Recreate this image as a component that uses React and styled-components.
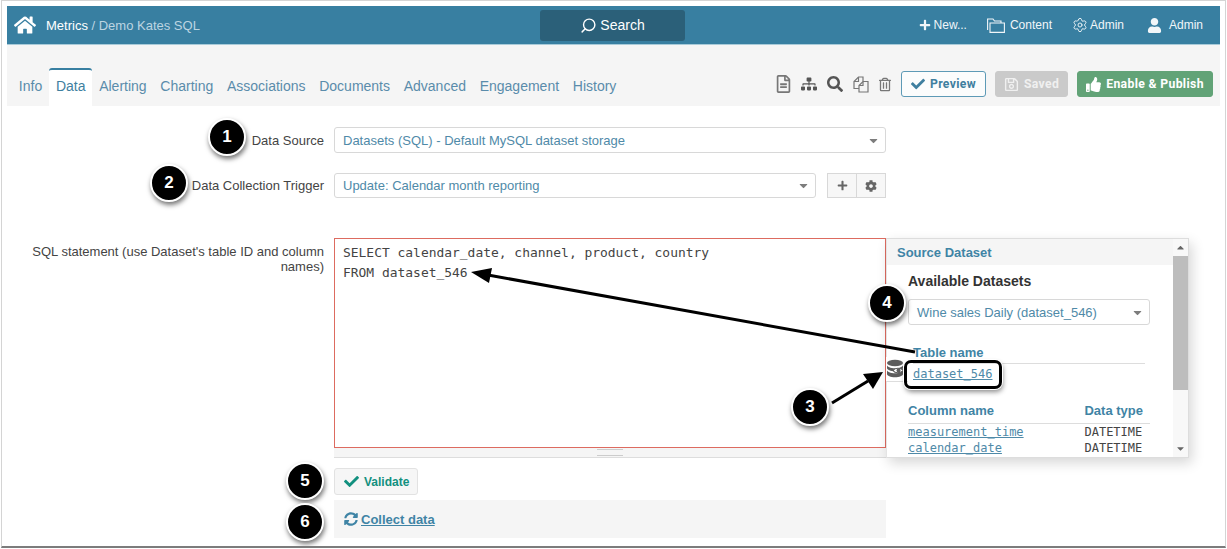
import React from "react";
import styled, { createGlobalStyle } from "styled-components";
import { FaHome, FaPlus, FaCheck, FaThumbsUp, FaRegSave, FaSitemap, FaSearch, FaRegFileAlt, FaRegTrashAlt, FaUser, FaCog, FaSyncAlt, FaCaretDown, FaCaretUp } from "react-icons/fa";
import { Search, Settings } from "lucide-react";

const GlobalStyle = createGlobalStyle`
  html, body { margin: 0; padding: 0; background: #fff; }
  body { font-family: "Liberation Sans", Arial, sans-serif; overflow: hidden; }
`;

const Frame = styled.div`
  position: relative;
  box-sizing: border-box;
  width: 1225px;
  height: 548px;
  margin-left: 1px;
  padding: 5px 5px 0 5px;
  border: 1px solid #d4d4d4;
  border-bottom: 2px solid #7c7c7c;
  overflow: hidden;
`;
const TopBar = styled.header`
  box-sizing: border-box;
  display: flex;
  align-items: center;
  height: 39px;
  background: #387fa1;
  border-bottom: 1px solid #a9cbd9;
  color: #fff;
  font-size: 13px;
`;
const Brand = styled.div`
  display: flex;
  align-items: center;
  width: 533px;
  padding-left: 7px;
  box-sizing: border-box;
`;
const Crumb = styled.span`
  margin-left: 10px;
  color: #fff;
  span { color: #bcd5e1; }
`;
const SearchBox = styled.div`
  display: flex;
  align-items: center;
  justify-content: center;
  gap: 3px;
  width: 145px;
  height: 31px;
  background: #2b6079;
  border-radius: 3px;
  font-size: 14px;
  svg { transform: scaleX(-1); }
`;
const TopMenu = styled.nav`
  display: flex;
  align-items: center;
  margin-left: auto;
  padding-right: 17px;
`;
const TopItem = styled.span`
  display: flex;
  align-items: center;
  gap: ${(p) => p.$gap || 3}px;
  margin-left: ${(p) => p.$left || 0}px;
  font-size: 12px;
  color: #f1f6f9;
`;
const Toolbar = styled.div`
  box-sizing: border-box;
  display: flex;
  align-items: flex-end;
  height: 61px;
  padding: 0 7px 0 5px;
  background: #f5f5f5;
`;
const Tabs = styled.div`
  display: flex;
  align-items: flex-end;
  height: 38px;
`;
const Tab = styled.div`
  box-sizing: border-box;
  height: 38px;
  padding: ${(p) => (p.$active ? "8px" : "10px")} 6.85px 0;
  font-size: 14px;
  color: ${(p) => (p.$active ? "#3f7f9f" : "#5a8cab")};
  background: ${(p) => (p.$active ? "#fff" : "transparent")};
  border-top: ${(p) => (p.$active ? "2px solid #387fa1" : "0")};
  border-radius: 3px 3px 0 0;
`;
const Actions = styled.div`
  display: flex;
  align-items: center;
  margin-left: auto;
  height: 26px;
  margin-bottom: 9px;
`;
const ToolIcon = styled.span`
  display: flex;
  justify-content: center;
  width: ${(p) => p.$w}px;
  margin-right: 10px;
  color: ${(p) => p.$color || "#777"};
`;
const ActionButton = styled.div`
  box-sizing: border-box;
  display: flex;
  align-items: center;
  justify-content: center;
  gap: 5px;
  width: ${(p) => p.$w}px;
  height: 26px;
  margin-left: ${(p) => p.$left}px;
  border-radius: 3px;
  border: 1px solid ${(p) => p.$border};
  background: ${(p) => p.$bg};
  color: ${(p) => p.$color};
  font-family: "Roboto", sans-serif;
  font-size: 12.2px;
  font-weight: 700;
  letter-spacing: 0.35px;
`;
const Form = styled.main`
  display: flex;
  flex-direction: column;
  padding-top: 21px;
`;
const Row = styled.div`
  display: grid;
  grid-template-columns: 317px ${(p) => p.$w || 552}px auto;
  column-gap: 10px;
  align-items: center;
  margin-bottom: ${(p) => p.$below || 0}px;
`;
const Label = styled.label`
  font-size: 13px;
  line-height: 15px;
  color: #444;
  text-align: right;
`;
const Select = styled.div`
  box-sizing: border-box;
  display: flex;
  align-items: center;
  justify-content: space-between;
  height: ${(p) => p.$h || 26}px;
  padding: 0 5px 0 8px;
  background: #fff;
  border: 1px solid #d8d8d8;
  border-radius: 3px;
  color: #4f8aa8;
  font-size: 13px;
  svg { color: #7d7d7d; }
`;
const ButtonGroup = styled.div`
  display: flex;
  margin-left: 1px;
`;
const GroupButton = styled.div`
  box-sizing: border-box;
  display: flex;
  align-items: center;
  justify-content: center;
  width: 30px;
  height: 25px;
  margin-left: ${(p) => (p.$joined ? -1 : 0)}px;
  background: #f7f7f7;
  border: 1px solid #d8d8d8;
  color: #666;
`;
const EditorColumn = styled.div`
  display: flex;
  flex-direction: column;
  width: 552px;
  height: 220px;
`;
const Editor = styled.div`
  box-sizing: border-box;
  height: 210px;
  padding: 4px 8px;
  border: 1px solid #dd6b60;
  font-family: "DejaVu Sans Mono", monospace;
  font-size: 12.95px;
  line-height: 20px;
  color: #444;
  white-space: pre;
`;
const Resizer = styled.div`
  box-sizing: border-box;
  display: flex;
  align-items: center;
  justify-content: center;
  height: 10px;
  background: #f5f5f5;
  border-bottom: 1px solid #ddd;
  &::after {
    content: "";
    width: 26px;
    height: 5px;
    border-top: 1px solid #ccc;
    border-bottom: 1px solid #ccc;
  }
`;
const SqlRow = styled.div`
  display: flex;
  height: 220px;
  margin-bottom: 10px;
`;
const SqlLabel = styled(Label)`
  width: 317px;
  margin-right: 10px;
  padding-top: 6px;
`;
const Panel = styled.aside`
  box-sizing: border-box;
  display: flex;
  width: 303px;
  height: 220px;
  background: #fff;
  border: 1px solid #ddd;
  border-left: 1px solid #e4e4e4;
  box-shadow: 3px 5px 12px rgba(0, 0, 0, 0.16);
  overflow: hidden;
`;
const PanelBody = styled.div`
  flex: 1;
  min-width: 0;
`;
const PanelTitle = styled.div`
  box-sizing: border-box;
  height: 26px;
  padding: 6px 10px;
  background: #f5f5f5;
  color: #3f84a5;
  font-size: 13px;
  line-height: 15px;
  font-weight: 700;
`;
const PanelContent = styled.div`
  padding: 8px 23px 0 21px;
`;
const PanelHeading = styled.div`
  font-size: 14px;
  font-weight: 700;
  color: #333;
  line-height: 16px;
  margin-bottom: 10px;
`;
const TableLabel = styled.div`
  margin: 20px 5px 0 5px;
  padding-bottom: 3px;
  border-bottom: 1px solid #ddd;
  font-size: 13px;
  font-weight: 700;
  line-height: 15px;
  color: #3f84a5;
`;
const MonoLink = styled.a`
  font-family: "DejaVu Sans Mono", monospace;
  font-size: 12px;
  line-height: 16px;
  color: #4f8aa8;
  text-decoration: underline;
`;
const TableLink = styled.div`
  margin: 1px 0 21px 5px;
  line-height: 16px;
`;
const Columns = styled.div`
  display: grid;
  grid-template-columns: 1fr auto;
  width: 242px;
`;
const ColumnHead = styled.div`
  padding-bottom: 5px;
  border-bottom: 1px solid #ddd;
  font-size: 13px;
  font-weight: 700;
  line-height: 15px;
  color: #3f84a5;
  text-align: ${(p) => (p.$right ? "right" : "left")};
  padding-right: ${(p) => (p.$right ? 7 : 0)}px;
`;
const TypeCell = styled.div`
  font-family: "DejaVu Sans Mono", monospace;
  font-size: 12px;
  line-height: 16px;
  color: #444;
  padding-right: 7px;
`;
const Scrollbar = styled.div`
  display: flex;
  flex-direction: column;
  align-items: center;
  width: 15px;
  background: #f8f8f8;
  color: #666;
`;
const ScrollArrow = styled.div`
  display: flex;
  height: 17px;
  align-items: center;
`;
const ScrollThumb = styled.div`
  width: 100%;
  height: 134px;
  margin-bottom: auto;
  background: #bdbdbd;
`;
const ValidateButton = styled.div`
  box-sizing: border-box;
  display: flex;
  align-items: center;
  gap: 5px;
  width: 84px;
  height: 27px;
  padding-left: 9px;
  margin-left: 327px;
  background: #f6f6f6;
  border: 1px solid #e2e2e2;
  border-radius: 3px;
  color: #12907f;
  font-size: 12px;
  font-weight: 700;
`;
const CollectBand = styled.div`
  box-sizing: border-box;
  display: flex;
  align-items: center;
  gap: 3px;
  width: 552px;
  height: 38px;
  margin: 5px 0 0 327px;
  padding-left: 10px;
  background: #f5f5f5;
  color: #3f84a5;
  font-size: 13px;
  font-weight: 700;
  a { color: #3f84a5; text-decoration: underline; }
`;
const Callout = styled.div`
  position: absolute;
  left: ${(p) => p.$x - 21}px;
  top: ${(p) => p.$y - 20}px;
  box-sizing: border-box;
  display: flex;
  align-items: center;
  justify-content: center;
  width: 38px;
  height: 38px;
  border-radius: 50%;
  background: #000;
  border: 2px solid #fff;
  box-shadow: 1px 3px 5px rgba(0, 0, 0, 0.55);
  color: #fff;
  font-size: 17px;
  font-weight: 700;
`;
const ArrowLayer = styled.svg`
  position: absolute;
  left: -2px;
  top: -1px;
  width: 1227px;
  height: 549px;
  pointer-events: none;
`;
const DbTab = styled.div`
  position: absolute;
  left: 884px;
  top: 356px;
  box-sizing: border-box;
  width: 22px;
  height: 25px;
  display: flex;
  align-items: center;
  background: #fff;
  border-bottom: 1px solid #ddd;
`;
const Highlight = styled.div`
  position: absolute;
  left: 902px;
  top: 359px;
  box-sizing: border-box;
  width: 98px;
  height: 29px;
  border: 3px solid #000;
  border-radius: 7px;
  box-shadow: 0 0 0 1px #fff, 1px 3px 5px rgba(0, 0, 0, 0.45);
`;

const tabs = ["Info", "Data", "Alerting", "Charting", "Associations", "Documents", "Advanced", "Engagement", "History"];
const callouts = [
  [1, 227, 137],
  [2, 169, 183],
  [3, 810, 407],
  [4, 887, 303],
  [5, 305, 481],
  [6, 305, 522],
];

// database stack with the eye on its right side
const DbEyeIcon = () => (
  <svg width="20" height="20" viewBox="0 0 20 20">
    <ellipse cx="9" cy="4" rx="8" ry="3.2" fill="#5c5c5c" />
    <path d="M1 6v3c0 1.8 3.6 3.2 8 3.2s8-1.4 8-3.2V6c0 1.8-3.6 3.2-8 3.2S1 7.800 1 6z" fill="#5c5c5c" />
    <path d="M1 11v4c0 1.800 3.600 3.200 8 3.200s8-1.400 8-3.200v-4c0 1.800-3.600 3.200-8 3.200S1 12.800 1 11z" fill="#5c5c5c" />
    <path d="M7 11.500c2-3 7-3 11 0c-4 3-9 3-11 0z" fill="#fff" stroke="#5c5c5c" strokeWidth="1.200" />
    <circle cx="12.500" cy="11.500" r="2" fill="#5c5c5c" />
  </svg>
);

const ContentIcon = () => (
  <svg width="18" height="15" viewBox="0 0 18 15" fill="none" stroke="#f1f6f9" strokeWidth="1.100">
    <path d="M.6 12V1h5.400l1.500 2h6.500v2" />
    <path d="M3 5h14.400v9.400H3z" />
  </svg>
);

const CopyDocsIcon = () => (
  <svg width="16" height="17" viewBox="0 0 16 17" fill="none" stroke="#777" strokeWidth="1.200">
    <path d="M6 12.500H1v-7L5.500 1H10v4" />
    <path d="M5.500 1v4.500H1" />
    <path d="M6 16V9.500L10 5.500h5V16z" />
    <path d="M10 5.500V9.500H6" />
  </svg>
);

export default function App() {
  return (
    <>
      <GlobalStyle />
      <Frame>
        <TopBar>
          <Brand>
            <FaHome size={22} />
            <Crumb>
              Metrics <span>/ Demo Kates SQL</span>
            </Crumb>
          </Brand>
          <SearchBox>
            <Search size={17} strokeWidth={2} />
            Search
          </SearchBox>
          <TopMenu>
            <TopItem>
              <FaPlus size={12} />
              New...
            </TopItem>
            <TopItem $left={20} $gap={5}>
              <ContentIcon />
              Content
            </TopItem>
            <TopItem $left={20} $gap={2}>
              <Settings size={16} strokeWidth={1.4} />
              Admin
            </TopItem>
            <TopItem $left={23} $gap={7}>
              <FaUser size={15} />
              Admin
            </TopItem>
          </TopMenu>
        </TopBar>
        <Toolbar>
          <Tabs>
            {tabs.map((t) => (
              <Tab key={t} $active={t === "Data"}>
                {t}
              </Tab>
            ))}
          </Tabs>
          <Actions>
            <ToolIcon $w={15}><FaRegFileAlt size={18} /></ToolIcon>
            <ToolIcon $w={16} $color="#555"><FaSitemap size={16} /></ToolIcon>
            <ToolIcon $w={16} $color="#555"><FaSearch size={16} /></ToolIcon>
            <ToolIcon $w={16}><CopyDocsIcon /></ToolIcon>
            <ToolIcon $w={12}><FaRegTrashAlt size={15} /></ToolIcon>
            <ActionButton $w={85} $left={0} $border="#5d9ab6" $bg="#fbfcfc" $color="#3f7f9f">
              <FaCheck size={14} />
              Preview
            </ActionButton>
            <ActionButton $w={73} $left={9} $border="#cacaca" $bg="#cacaca" $color="#f0f0f0">
              <FaRegSave size={15} />
              Saved
            </ActionButton>
            <ActionButton $w={136} $left={9} $border="#62a377" $bg="#62a377" $color="#fff">
              <FaThumbsUp size={15} />
              Enable &amp; Publish
            </ActionButton>
          </Actions>
        </Toolbar>
        <Form>
          <Row $below={20}>
            <Label>Data Source</Label>
            <Select>
              Datasets (SQL) - Default MySQL dataset storage
              <FaCaretDown size={13} />
            </Select>
          </Row>
          <Row $below={40} $w={482}>
            <Label>Data Collection Trigger</Label>
            <Select $h={25}>
              Update: Calendar month reporting
              <FaCaretDown size={13} />
            </Select>
            <ButtonGroup>
              <GroupButton><FaPlus size={11} /></GroupButton>
              <GroupButton $joined><FaCog size={12} /></GroupButton>
            </ButtonGroup>
          </Row>
          <SqlRow>
            <SqlLabel>SQL statement (use Dataset's table ID and column names)</SqlLabel>
            <EditorColumn>
              <Editor>{"SELECT calendar_date, channel, product, country\nFROM dataset_546"}</Editor>
              <Resizer />
            </EditorColumn>
            <Panel>
              <PanelBody>
                <PanelTitle>Source Dataset</PanelTitle>
                <PanelContent>
                  <PanelHeading>Available Datasets</PanelHeading>
                  <Select>
                    Wine sales Daily (dataset_546)
                    <FaCaretDown size={13} />
                  </Select>
                  <TableLabel>Table name</TableLabel>
                  <TableLink><MonoLink>dataset_546</MonoLink></TableLink>
                  <Columns>
                    <ColumnHead>Column name</ColumnHead>
                    <ColumnHead $right>Data type</ColumnHead>
                    <MonoLink>measurement_time</MonoLink>
                    <TypeCell>DATETIME</TypeCell>
                    <MonoLink>calendar_date</MonoLink>
                    <TypeCell>DATETIME</TypeCell>
                  </Columns>
                </PanelContent>
              </PanelBody>
              <Scrollbar>
                <ScrollArrow><FaCaretUp size={11} /></ScrollArrow>
                <ScrollThumb />
                <ScrollArrow><FaCaretDown size={11} /></ScrollArrow>
              </Scrollbar>
            </Panel>
          </SqlRow>
          <ValidateButton>
            <FaCheck size={15} />
            Validate
          </ValidateButton>
          <CollectBand>
            <FaSyncAlt size={14} />
            <a>Collect data</a>
          </CollectBand>
        </Form>
        <DbTab><DbEyeIcon /></DbTab>
        <Highlight />
        <ArrowLayer viewBox="0 0 1227 549">
          <line x1="915" y1="352" x2="488" y2="275" stroke="#000" strokeWidth="3" />
          <polygon points="471,272 492,268 489,283" fill="#000" />
          <line x1="832" y1="403" x2="868" y2="381" stroke="#000" strokeWidth="3" />
          <polygon points="883,372 873,389 863,374" fill="#000" />
        </ArrowLayer>
        {callouts.map(([n, x, y]) => (
          <Callout key={n} $x={x} $y={y}>{n}</Callout>
        ))}
      </Frame>
    </>
  );
}
